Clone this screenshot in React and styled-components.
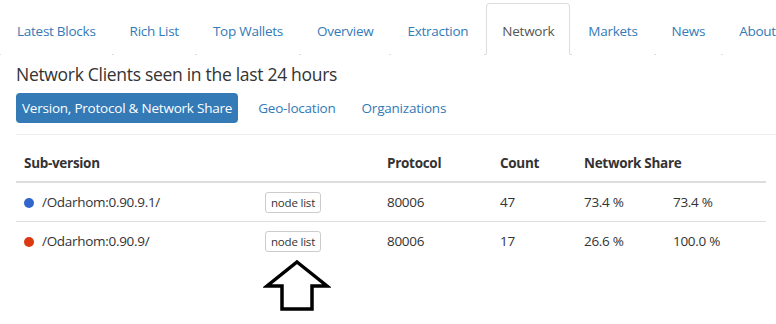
import React from "react";
import styled, { createGlobalStyle } from "styled-components";

const Global = createGlobalStyle`
  html, body { margin: 0; padding: 0; background: #fff; }
  body {
    font-family: "Open Sans", "Noto Sans", sans-serif;
    font-size: 14px;
    line-height: 20px;
    color: #333;
  }
`;

const Page = styled.div`
  position: relative;
  width: 776px;
  height: 324px;
  overflow: hidden;
`;

const Tabs = styled.ul`
  display: flex;
  list-style: none;
  margin: 3px 0 0 0;
  padding: 0 0 0 1px;
  border-bottom: 1px solid #ddd;
  white-space: nowrap;
`;

const Tab = styled.li`
  margin: 0 2px -1px 0;
  padding: 17px 15px 13px;
  border: 1px solid ${(p) => (p.$active ? "#ddd" : "transparent")};
  border-bottom-color: ${(p) => (p.$active ? "#fff" : "transparent")};
  border-radius: 4px 4px 0 0;
  background: #fff;
  color: ${(p) => (p.$active ? "#555" : "#337ab7")};
  font-size: 13.5px;
  letter-spacing: -0.26px;
`;

const Content = styled.div`
  padding: 0 10px 0 16px;
`;

const Heading = styled.h3`
  margin: 7px 0 0 0;
  font-size: 17.5px;
  font-weight: 400;
  line-height: 24px;
  letter-spacing: -0.3px;
  color: #333;
`;

const Pills = styled.div`
  display: flex;
  gap: 14px;
  margin-top: 7px;
`;

const Pill = styled.span`
  padding: 5px 6px;
  border-radius: 4px;
  font-size: 13.5px;
  letter-spacing: -0.22px;
  background: ${(p) => (p.$active ? "#337ab7" : "transparent")};
  color: ${(p) => (p.$active ? "#fff" : "#337ab7")};
`;

const TableWrap = styled.div`
  margin-top: 11px;
  margin-right: -10px;
  border-top: 1px solid #eee;
  padding-top: 10px;
`;

const Table = styled.table`
  width: 750px;
  border-collapse: collapse;
  table-layout: fixed;
`;

const Th = styled.th`
  text-align: left;
  padding: 8px;
  font-weight: 700;
  font-size: 13.5px;
  letter-spacing: -0.3px;
  border-bottom: 2px solid #ddd;
`;

const Td = styled.td`
  padding: 8px;
  font-size: 13.5px;
  letter-spacing: -0.3px;
  vertical-align: middle;
  border-top: ${(p) => (p.$first ? "none" : "1px solid #ddd")};
  height: 22px;
`;

const Dot = styled.span`
  display: inline-block;
  width: 10px;
  height: 10px;
  border-radius: 50%;
  background: ${(p) => p.$color};
  margin-right: 8px;
  vertical-align: -1px;
`;

const SmallButton = styled.button`
  font-family: inherit;
  font-size: 11.5px;
  line-height: 15px;
  letter-spacing: -0.2px;
  color: #333;
  background: #fff;
  border: 1px solid #ccc;
  border-radius: 3px;
  padding: 2px 5px 2px;
  cursor: pointer;
`;

const Arrow = styled.svg`
  position: absolute;
  left: 263px;
  top: 259px;
`;

const tabs = [
  "Latest Blocks",
  "Rich List",
  "Top Wallets",
  "Overview",
  "Extraction",
  "Network",
  "Markets",
  "News",
  "About",
];

const rows = [
  { color: "#3366cc", version: "/Odarhom:0.90.9.1/", protocol: "80006", count: "47", share: "73.4 %", cum: "73.4 %" },
  { color: "#dc3912", version: "/Odarhom:0.90.9/", protocol: "80006", count: "17", share: "26.6 %", cum: "100.0 %" },
];

export default function App() {
  return (
    <Page>
      <Global />
      <Tabs>
        {tabs.map((t) => (
          <Tab key={t} $active={t === "Network"}>{t}</Tab>
        ))}
      </Tabs>
      <Content>
        <Heading>Network Clients seen in the last 24 hours</Heading>
        <Pills>
          <Pill $active>Version, Protocol &amp; Network Share</Pill>
          <Pill>Geo-location</Pill>
          <Pill>Organizations</Pill>
        </Pills>
        <TableWrap>
          <Table>
            <colgroup>
              <col style={{ width: 241 }} />
              <col style={{ width: 122 }} />
              <col style={{ width: 113 }} />
              <col style={{ width: 84 }} />
              <col style={{ width: 89 }} />
              <col style={{ width: 101 }} />
            </colgroup>
            <thead>
              <tr>
                <Th>Sub-version</Th>
                <Th></Th>
                <Th>Protocol</Th>
                <Th>Count</Th>
                <Th colSpan={2}>Network Share</Th>
              </tr>
            </thead>
            <tbody>
              {rows.map((r, i) => (
                <tr key={r.version}>
                  <Td $first={i === 0}><Dot $color={r.color} />{r.version}</Td>
                  <Td $first={i === 0}><SmallButton>node list</SmallButton></Td>
                  <Td $first={i === 0}>{r.protocol}</Td>
                  <Td $first={i === 0}>{r.count}</Td>
                  <Td $first={i === 0}>{r.share}</Td>
                  <Td $first={i === 0}>{r.cum}</Td>
                </tr>
              ))}
            </tbody>
          </Table>
        </TableWrap>
      </Content>
      <Arrow width="68" height="54" viewBox="0 0 68 54">
        <path
          d="M34 3 L64 27 L49 27 L49 50 L19 50 L19 27 L4 27 Z"
          fill="#fff"
          stroke="#000"
          strokeWidth="3.5"
          strokeLinejoin="miter"
        />
      </Arrow>
    </Page>
  );
}
